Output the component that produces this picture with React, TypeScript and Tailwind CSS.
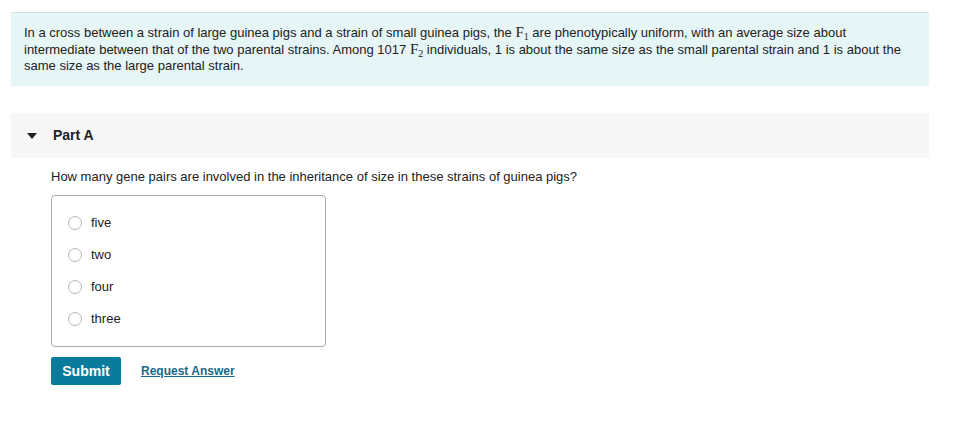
import React, { useState } from 'react';

const options = ['five', 'two', 'four', 'three'];

const Sub: React.FC<{ n: string }> = ({ n }) => (
  <span className="font-['Liberation_Serif','DejaVu_Serif',serif] text-[15px]">
    F<sub className="text-[10px]">{n}</sub>
  </span>
);

export default function App() {
  const [picked, setPicked] = useState<string | null>(null);

  return (
    <div className="min-h-[423px] bg-white font-['Liberation_Sans',Arial,sans-serif] text-[#222]">
      <div className="ml-[11px] w-[918px] pt-[12px]">
        {/* intro */}
        <div className="border-t border-[#dcdcdc] bg-[#e6f5f6] pl-[13px] pr-[12px] pt-[11px] pb-[12px] text-[13px] leading-[16px]">
          In a cross between a strain of large guinea pigs and a strain of small guinea pigs, the <Sub n="1" /> are
          phenotypically uniform, with an average size about intermediate between that of the two parental strains.
          Among 1017 <Sub n="2" /> individuals, 1 is about the same size as the small parental strain and 1 is about the
          same size as the large parental strain.
        </div>

        {/* part header */}
        <div className="mt-[27px] flex h-[45px] items-center bg-[#f7f7f7]">
          <span className="ml-[16px] h-0 w-0 border-x-[5px] border-t-[6px] border-x-transparent border-t-[#222]" />
          <span className="ml-[16px] text-[14px] font-bold">Part A</span>
        </div>

        <div className="pl-[40px]">
          <p className="mt-[11px] text-[13px] leading-[16px]">
            How many gene pairs are involved in the inheritance of size in these strains of guinea pigs?
          </p>

          <div className="mt-[10px] flex h-[152px] w-[275px] flex-col gap-[18px] rounded-[4px] border border-[#aaa] pl-[16px] pt-[20px]">
            {options.map((o) => (
              <label key={o} className="flex h-[14px] cursor-pointer items-center text-[13px]">
                <span
                  onClick={() => setPicked(o)}
                  className="flex h-[14px] w-[14px] items-center justify-center rounded-full border border-[#b5b5b5] bg-white"
                >
                  {picked === o && <span className="h-[6px] w-[6px] rounded-full bg-[#0b7b9c]" />}
                </span>
                <span className="ml-[9px]">{o}</span>
              </label>
            ))}
          </div>

          <div className="mt-[10px] flex items-center">
            <button className="h-[28px] w-[70px] rounded-[2px] bg-[#0b7b9c] text-[14px] font-bold text-white">
              Submit
            </button>
            <a href="#" className="ml-[20px] text-[12px] font-bold text-[#19698c] underline">
              Request Answer
            </a>
          </div>
        </div>
      </div>
    </div>
  );
}
